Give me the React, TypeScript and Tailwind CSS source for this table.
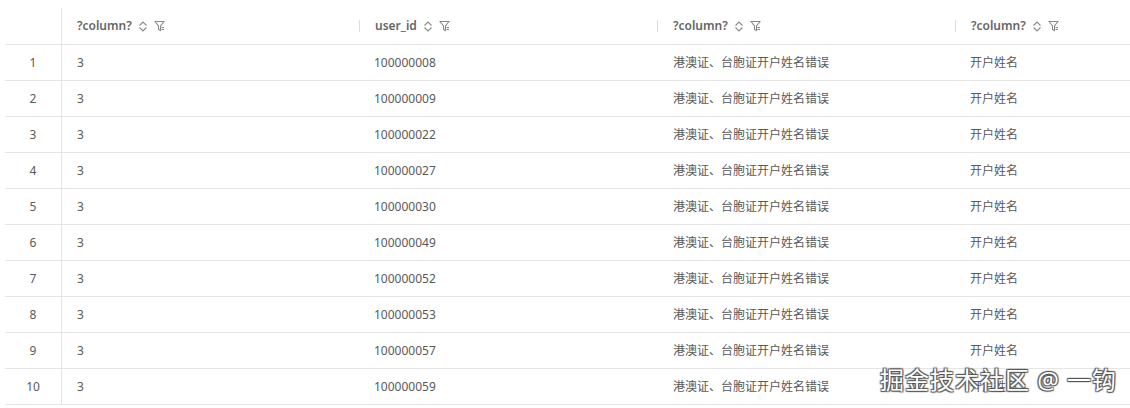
import React from "react";

const rows = [
  { id: "100000008" },
  { id: "100000009" },
  { id: "100000022" },
  { id: "100000027" },
  { id: "100000030" },
  { id: "100000049" },
  { id: "100000052" },
  { id: "100000053" },
  { id: "100000057" },
  { id: "100000059" },
];

const columns = ["?column?", "user_id", "?column?", "?column?"];

function SortIcon() {
  return (
    <svg width="12" height="13" viewBox="0 0 12 13" fill="none" stroke="#8a8a8a" strokeWidth="1.1">
      <path d="M2.5 5.5 L6 2 L9.5 5.5" />
      <path d="M2.5 7.5 L6 11 L9.5 7.5" />
    </svg>
  );
}

function FilterIcon() {
  return (
    <svg width="11" height="12" viewBox="0 0 11 12" fill="none" stroke="#8a8a8a" strokeWidth="1.1">
      <path d="M1 1.5 H10 L6.5 6 V10.5 L4.5 9.5 V6 Z" />
      <path d="M7.5 7.5 H10" />
      <path d="M7.5 9.5 H10" />
    </svg>
  );
}

export default function App() {
  return (
    <div
      className="relative w-[1130px] h-[408px] bg-white overflow-hidden pt-2 pl-[5px] text-[12px] text-[#595959]"
      style={{ fontFamily: '"Noto Sans", "Noto Sans CJK SC", sans-serif' }}
    >
      {/* Header */}
      <div className="flex h-[37px] border-b border-[#e5e5e5]">
        <div className="w-[57px] shrink-0 border-r border-[#e5e5e5]" />
        {columns.map((col, i) => (
          <div key={i} className="w-[298px] shrink-0 flex items-center relative">
            {i > 0 && <div className="absolute left-[-1px] top-[12px] h-[12px] w-px bg-[#dcdcdc]" />}
            <div className="flex items-center gap-[5px] pl-[15px]">
              <span className="font-semibold text-[#666]">{col}</span>
              <SortIcon />
              <FilterIcon />
            </div>
          </div>
        ))}
      </div>

      {/* Body */}
      {rows.map((row, i) => (
        <div key={i} className="flex h-[36px] border-b border-[#e5e5e5]">
          <div className="w-[57px] shrink-0 border-r border-[#e5e5e5] flex items-center justify-center">
            {i + 1}
          </div>
          <div className="w-[298px] shrink-0 flex items-center pl-[15px]">3</div>
          <div className="w-[298px] shrink-0 flex items-center pl-[14px]">{row.id}</div>
          <div className="w-[298px] shrink-0 flex items-center pl-[15px]">港澳证、台胞证开户姓名错误</div>
          <div className="w-[298px] shrink-0 flex items-center pl-[14px]">开户姓名</div>
        </div>
      ))}

      {/* Watermark */}
      <div
        className="absolute left-[880px] top-[362px] text-[24px] text-white tracking-[1px]"
        style={{ textShadow: "1px 1px 1px #555, -1px -1px 1px #555, 1px -1px 1px #555, -1px 1px 1px #555" }}
      >
        掘金技术社区 @ 一钩
      </div>
    </div>
  );
}
